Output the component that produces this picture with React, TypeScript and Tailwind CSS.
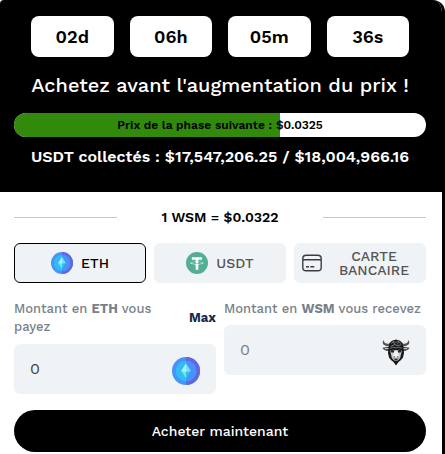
import { useState } from "react"

// ---------------------------------------------------------------------------
// Icons
// ---------------------------------------------------------------------------

function EthIcon({ className }: { className: string }) {
  return (
    <svg viewBox="0 0 28 28" className={className} aria-hidden="true">
      <circle cx="14" cy="14" r="14" fill="#4693fc" />
      <path d="M14 0a14 14 0 0 1 0 28z" fill="#6266df" />
      <circle cx="14" cy="14" r="10.3" fill="#2fbdf2" />
      <path d="M14 3.7a10.3 10.3 0 0 1 0 20.6z" fill="#4693fc" />
      <path d="M14 6.2 9.1 14.1 14 16.8z" fill="#a6f1fb" />
      <path d="M14 6.2 18.9 14.1 14 16.8z" fill="#7be0f6" />
      <path d="M9.1 14.1 14 21.5v-6.6z" fill="#72e2f2" />
      <path d="M18.9 14.1 14 21.5v-6.6z" fill="#2fc3ee" />
    </svg>
  )
}

function TetherIcon({ className }: { className: string }) {
  return (
    <svg viewBox="0 0 32 32" className={className} aria-hidden="true">
      <circle cx="16" cy="16" r="16" fill="#53ae94" />
      <path
        fill="#fff"
        d="M17.9 17.4c-.1 0-.7.1-1.9.1-1 0-1.7 0-2-.1-3.9-.2-6.8-.9-6.8-1.7s2.9-1.5 6.8-1.7v2.7c.3 0 1 .1 2 .1 1.2 0 1.800 0 1.9-.1V14c3.9.2 6.8.9 6.8 1.7s-2.900 1.5-6.8 1.7m0-3.7v-2.3h5.5V7.700H8.500v3.700H14v2.300c-4.500.2-7.800 1.100-7.800 2.200s3.300 2 7.800 2.200v7.700h3.900v-7.700c4.500-.2 7.800-1.100 7.800-2.200s-3.300-2-7.800-2.200"
      />
    </svg>
  )
}

function CardIcon({ className }: { className: string }) {
  return (
    <svg viewBox="0 0 20 18" className={className} fill="none" stroke="#3a3d40" strokeWidth="1.4" aria-hidden="true">
      <rect x="0.8" y="1.2" width="18.4" height="15.6" rx="3.4" />
      <path d="M1 5.8h18" />
      <path d="M4 12.7h3M8.3 12.7h4" />
    </svg>
  )
}

function BullIcon({ className }: { className: string }) {
  return (
    <svg viewBox="0 0 28 28" className={className} aria-hidden="true">
      {/* horns */}
      <path d="M1.500 2C-.5 5 1 8 7 8.200L9 5.500C4 6.500 2 5 1.500 2z" fill="#55585a" />
      <path d="M26.500 2c2 3 .5 6-5.500 6.200l-2-2.700c5 1 7-.5 7.500-3.500z" fill="#55585a" />
      {/* ears */}
      <path d="M8 8.500.500 9.800C1.200 12 4 13.500 8 13zM20 8.500l7.500 1.300c-.7 2.200-3.500 3.700-7.500 3.200z" fill="#45484a" />
      <path d="M2.800 10.700 7 10.500M25.200 10.700 21 10.500" stroke="#d0d3d5" strokeWidth="1" />
      {/* head and beard */}
      <path d="M7.500 5 10 2.700l4-1.200 4 1.200L20.500 5l1 5 .5 5-1 4.500-2.500 3-2 1.500L14 27.500 11.500 24l-2-1.500L7 19.500 6 15l.5-5z" fill="#161718" />
      <path
        d="m9 5.500 3-2 1.500 1.200L16 3l3 2.500M8.500 8.500l4-2 2.500 1.200 4.500-1M11 3.500l2 3.500M17 4l-2 2.500M8 10.500l3-1.500 3 1 3-1 3 1.500"
        fill="none"
        stroke="#96999b"
        strokeWidth="0.7"
      />
      {/* face */}
      <path d="m8 12.500 3-.8 3 .5 3-.5 3 .8-1 4-.8 3.500-2.200 2.500h-4L9.800 20 9 16.500z" fill="#c3c6c8" />
      <path d="m8.300 11.500 4.200 1-.8 2.200-2.700-.5zM19.700 11.500l-4.200 1 .8 2.200 2.700-.5z" fill="#242627" />
      <path d="m12.300 13.500 1.700-1 1.700 1 1.800 5-1.500 1.500h-4l-1.500-1.500z" fill="#f0f2f3" />
      <path d="M11.300 19.800h5.400l-.9 2.200-1.800.8-1.800-.8z" fill="#85888a" />
      <path d="M11.500 18.800h1.400M15.100 18.800h1.400M12.800 21.500h2.400" stroke="#222" strokeWidth="0.9" />
    </svg>
  )
}

// ---------------------------------------------------------------------------
// Data
// ---------------------------------------------------------------------------

const countdown = ["02d", "06h", "05m", "36s"]

const methods = [
  { id: "eth", label: "ETH", icon: <EthIcon className="size-[22px] shrink-0" /> },
  { id: "usdt", label: "USDT", icon: <TetherIcon className="size-[22px] shrink-0" /> },
  { id: "card", label: "CARTE BANCAIRE", icon: <CardIcon className="h-[18px] w-5 shrink-0" /> },
]

const progress = 64.6

// ---------------------------------------------------------------------------
// Component
// ---------------------------------------------------------------------------

export default function App() {
  const [method, setMethod] = useState("eth")

  return (
    <main className="overflow-hidden rounded-tl-sm rounded-tr-xl border-r-[3px] border-black bg-white pb-0.5 font-['Work_Sans',Inter,sans-serif] text-black">
      <header className="bg-black pt-4 pr-4 pb-[23px] pl-3.5 text-center text-white">
        <div className="grid grid-cols-4 gap-4 px-[17px]">
          {countdown.map((value) => (
            <div
              key={value}
              className="flex h-[41px] items-center justify-center rounded-lg bg-white text-lg font-semibold text-black"
            >
              {value}
            </div>
          ))}
        </div>
        <h1 className="mt-4 text-xl leading-6 font-medium whitespace-nowrap">
          Achetez avant l'augmentation du prix !
        </h1>
        <div className="mt-4 grid h-6 overflow-hidden rounded-full bg-white">
          <div className="col-start-1 row-start-1 bg-[#318a0b]" style={{ width: `${progress}%` }} />
          <p className="col-start-1 row-start-1 text-xs leading-6 font-semibold text-black">
            Prix de la phase suivante : $0.0325
          </p>
        </div>
        <p className="mt-2 text-base leading-6 font-semibold whitespace-nowrap">
          USDT collectés : $17,547,206.25 / $18,004,966.16
        </p>
      </header>

      <section className="pt-[13px] pr-4 pl-3.5">
        <div className="flex items-center justify-between">
          <span className="h-px w-1/4 bg-[#c8c8c8]" />
          <p className="text-sm leading-6 font-semibold">1 WSM = $0.0322</p>
          <span className="h-px w-1/4 bg-[#c8c8c8]" />
        </div>

        <div className="mt-3.5 grid grid-cols-3 gap-2">
          {methods.map(({ id, label, icon }) => (
            <button
              key={id}
              type="button"
              aria-pressed={method === id}
              onClick={() => setMethod(id)}
              className={`flex h-10 items-center justify-center gap-2 rounded-md border px-[7px] text-sm leading-[14px] font-medium ${
                method === id
                  ? "border-black bg-[#f0f3f6] text-black"
                  : "border-[#f0f3f6] bg-[#f0f3f6] text-[#555555]"
              }`}
            >
              {icon}
              <span className={id === "card" ? "flex-1" : ""}>{label}</span>
            </button>
          ))}
        </div>

        <div className="mt-[17px] grid grid-cols-2 items-start gap-2 text-[13px] leading-[18px] font-medium text-[#78818a]">
          <div>
            <div className="flex items-center justify-between">
              <label htmlFor="pay" className="w-40">
                Montant en <b className="font-bold">ETH</b> vous payez
              </label>
              <button type="button" className="font-bold text-[#172b4d]">
                Max
              </button>
            </div>
            <div className="mt-2 flex h-[50px] items-center rounded-md bg-[#f0f3f6] px-4">
              <input
                id="pay"
                defaultValue="0"
                inputMode="decimal"
                className="min-w-0 flex-1 text-base font-normal text-[#444444] outline-none"
              />
              <EthIcon className="mt-1 size-7 shrink-0" />
            </div>
          </div>
          <div>
            <label htmlFor="receive" className="block whitespace-nowrap">
              Montant en <b className="font-bold">WSM</b> vous recevez
            </label>
            <div className="mt-[7px] flex h-[50px] items-center rounded-md bg-[#f0f3f6] px-4">
              <input
                id="receive"
                defaultValue="0"
                inputMode="decimal"
                className="min-w-0 flex-1 text-base font-normal text-[#78818a] outline-none"
              />
              <BullIcon className="mt-1 size-7 shrink-0" />
            </div>
          </div>
        </div>

        <button
          type="button"
          className="mt-4 h-[42px] w-full rounded-full bg-black text-sm font-medium text-white"
        >
          Acheter maintenant
        </button>
      </section>
    </main>
  )
}
